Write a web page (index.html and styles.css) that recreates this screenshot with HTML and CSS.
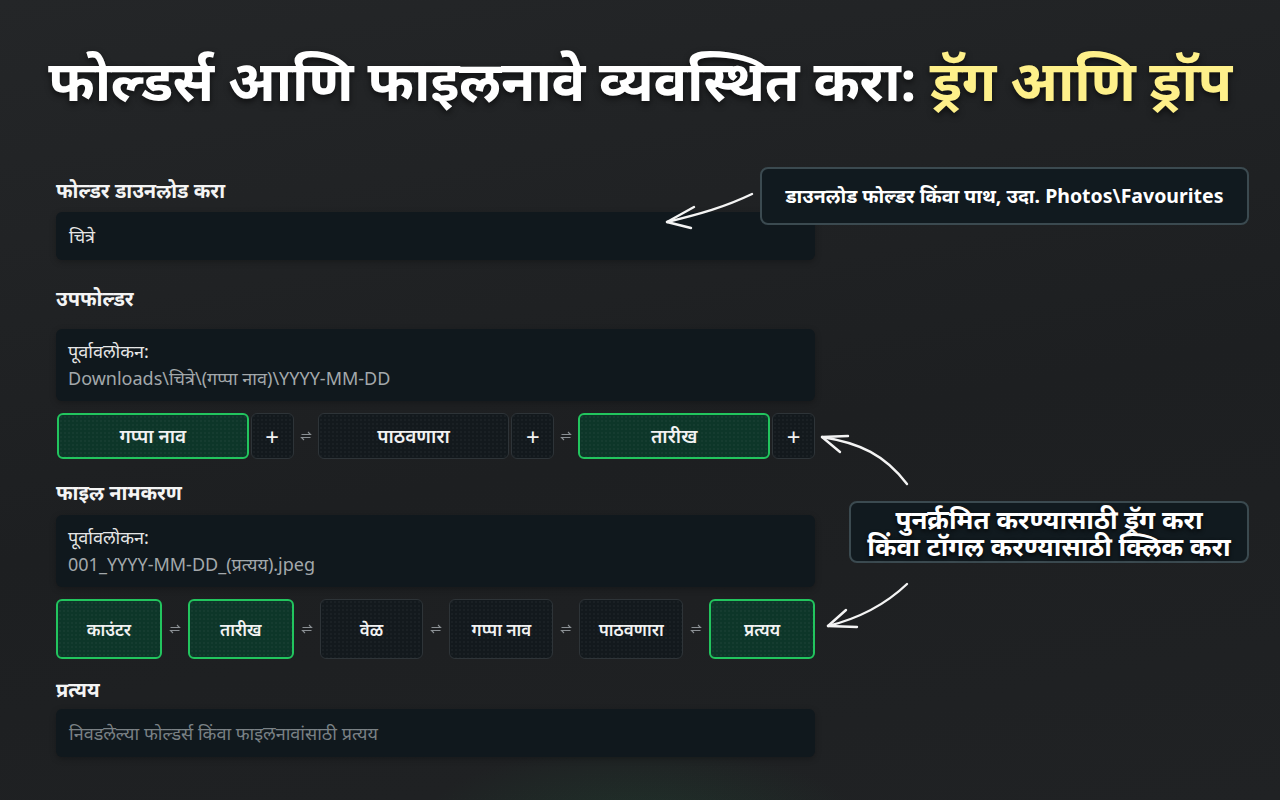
FILE: index.html
```html
<!DOCTYPE html>
<html lang="mr">
<head>
<meta charset="utf-8">
<link rel="stylesheet" href="styles.css">
</head>
<body>
<div class="page">
  <h1 class="title">फोल्डर्स आणि फाइलनावे व्यवस्थित करा: <span class="hl">ड्रॅग आणि ड्रॉप</span></h1>

  <div class="form">
    <div class="label">फोल्डर डाउनलोड करा</div>
    <div class="field">चित्रे</div>

    <div class="label sp">उपफोल्डर</div>
    <div class="preview">
      <div class="pv-title">पूर्वावलोकन:</div>
      <div class="pv-path">Downloads\चित्रे\(गप्पा नाव)\YYYY-MM-DD</div>
    </div>

    <div class="chips chips1">
      <div class="chip on">गप्पा नाव</div>
      <div class="plus">+</div>
      <span class="swap"><svg viewBox="0 0 12 12" width="12" height="12"><path d="M1.5 4.5h9l-2.5-2.5M10.5 7.5h-9l2.5 2.5" fill="none" stroke="#8a8f93" stroke-width="1.1"/></svg></span>
      <div class="chip">पाठवणारा</div>
      <div class="plus">+</div>
      <span class="swap"><svg viewBox="0 0 12 12" width="12" height="12"><path d="M1.5 4.5h9l-2.5-2.5M10.5 7.5h-9l2.5 2.5" fill="none" stroke="#8a8f93" stroke-width="1.1"/></svg></span>
      <div class="chip on">तारीख</div>
      <div class="plus">+</div>
    </div>

    <div class="label sp2">फाइल नामकरण</div>
    <div class="preview">
      <div class="pv-title">पूर्वावलोकन:</div>
      <div class="pv-path">001_YYYY-MM-DD_(प्रत्यय).jpeg</div>
    </div>

    <div class="chips chips2">
      <div class="chip on">काउंटर</div>
      <span class="swap"><svg viewBox="0 0 12 12" width="12" height="12"><path d="M1.5 4.5h9l-2.5-2.5M10.5 7.5h-9l2.5 2.5" fill="none" stroke="#8a8f93" stroke-width="1.1"/></svg></span>
      <div class="chip on">तारीख</div>
      <span class="swap"><svg viewBox="0 0 12 12" width="12" height="12"><path d="M1.5 4.5h9l-2.5-2.5M10.5 7.5h-9l2.5 2.5" fill="none" stroke="#8a8f93" stroke-width="1.1"/></svg></span>
      <div class="chip">वेळ</div>
      <span class="swap"><svg viewBox="0 0 12 12" width="12" height="12"><path d="M1.5 4.5h9l-2.5-2.5M10.5 7.5h-9l2.5 2.5" fill="none" stroke="#8a8f93" stroke-width="1.1"/></svg></span>
      <div class="chip">गप्पा नाव</div>
      <span class="swap"><svg viewBox="0 0 12 12" width="12" height="12"><path d="M1.5 4.5h9l-2.5-2.5M10.5 7.5h-9l2.5 2.5" fill="none" stroke="#8a8f93" stroke-width="1.1"/></svg></span>
      <div class="chip">पाठवणारा</div>
      <span class="swap"><svg viewBox="0 0 12 12" width="12" height="12"><path d="M1.5 4.5h9l-2.5-2.5M10.5 7.5h-9l2.5 2.5" fill="none" stroke="#8a8f93" stroke-width="1.1"/></svg></span>
      <div class="chip on">प्रत्यय</div>
    </div>

    <div class="label sp3">प्रत्यय</div>
    <div class="field ph">निवडलेल्या फोल्डर्स किंवा फाइलनावांसाठी प्रत्यय</div>
  </div>

  <div class="callout c1">डाउनलोड फोल्डर किंवा पाथ, उदा. Photos\Favourites</div>
  <div class="callout c2">पुनर्क्रमित करण्यासाठी ड्रॅग करा<br>किंवा टॉगल करण्यासाठी क्लिक करा</div>

  <svg class="arrows" width="1280" height="800" viewBox="0 0 1280 800">
    <g fill="none" stroke="#f4f4f4" stroke-width="2.4" stroke-linecap="round" stroke-linejoin="round">
      <path d="M752 194 C725 207 700 214 667 222"/>
      <path d="M694 207 L667 222 L691 228"/>
      <path d="M907 484 C885 455 860 443 822 437"/>
      <path d="M848 436 L822 437 L840 452"/>
      <path d="M907 584 C885 605 860 618 828 626"/>
      <path d="M846 610 L828 626 L857 627"/>
    </g>
  </svg>
</div>
</body>
</html>
```
FILE: styles.css
```css
* { box-sizing: border-box; }
html, body { margin: 0; padding: 0; }
body {
  width: 1280px;
  height: 800px;
  overflow: hidden;
  font-family: "Noto Sans", "Noto Sans Devanagari", "Open Sans", sans-serif;
  color: #f2f2f2;
  background:
    radial-gradient(ellipse 320px 120px at 640px 830px, rgba(34, 90, 60, 0.3), transparent 70%),
    linear-gradient(170deg, #242628 0%, #1d1f21 55%, #202224 100%);
}
.page {
  position: relative;
  width: 1280px;
  height: 800px;
}
.title {
  margin: 0;
  padding-top: 41px;
  text-align: center;
  font-size: 56px;
  font-weight: 700;
  line-height: 76px;
  color: #ffffff;
  letter-spacing: -0.3px;
  text-shadow: 0 3px 6px rgba(0,0,0,0.6);
}
.hl { color: #fef08a; }
.form {
  margin-left: 56px;
  width: 759px;
  padding-top: 62px;
  display: flex;
  flex-direction: column;
}
.label {
  font-size: 20px;
  font-weight: 700;
  line-height: 24px;
  color: #f4f4f4;
  margin-bottom: 9px;
}
.label.sp { margin-top: 27px; margin-bottom: 18px; }
.label.sp2 { margin-top: 22px; margin-bottom: 10px; }
.label.sp3 { margin-top: 19px; margin-bottom: 7px; }
.field {
  height: 48px;
  background: #10181d;
  border-radius: 6px;
  padding: 0 13px;
  display: flex;
  align-items: center;
  font-size: 18px;
  color: #e6e6e6;
  box-shadow: 0 2px 6px rgba(0,0,0,0.25);
}
.field.ph { color: #7a8185; }
.preview {
  height: 72px;
  background: #10181d;
  border-radius: 6px;
  padding: 9px 12px;
  font-size: 18px;
  line-height: 27px;
  box-shadow: 0 2px 6px rgba(0,0,0,0.25);
}
.pv-title { color: #e6e6e6; }
.pv-path { color: #a3a8ab; }
.chips {
  display: flex;
  align-items: center;
  margin-top: 12px;
}
.chip {
  height: 46px;
  border-radius: 6px;
  border: 1px solid #2e3438;
  background-color: #13191d;
  background-image: radial-gradient(rgba(255,255,255,0.035) 0.7px, transparent 0.8px);
  background-size: 4px 4px;
  display: flex;
  align-items: center;
  justify-content: center;
  font-size: 19px;
  font-weight: 600;
  color: #f2f2f2;
}
.chip.on {
  background-color: #0d3629;
  border: 2px solid #22c55e;
}
.chips1 .chip { width: 192px; }
.chips1 .chip:first-child { margin-left: 1px; }
.plus {
  width: 43px;
  height: 46px;
  margin-left: 2px;
  border-radius: 6px;
  border: 1px solid #2e3438;
  background-color: #13191d;
  background-image: radial-gradient(rgba(255,255,255,0.035) 0.7px, transparent 0.8px);
  background-size: 4px 4px;
  display: flex;
  align-items: center;
  justify-content: center;
  font-size: 24px;
  font-weight: 400;
  color: #f2f2f2;
}
.swap {
  width: 24px;
  flex: none;
  display: flex;
  justify-content: center;
  align-items: center;
}
.chips2 { margin-top: 12px; }
.chips2 .chip { flex: 1; height: 60px; font-size: 17px; }
.chips2 .swap { width: 26px; }
.callout {
  position: absolute;
  background: #111a1f;
  border: 2px solid #3b4a50;
  border-radius: 8px;
  color: #ffffff;
  font-weight: 700;
  text-align: center;
}
.c1 {
  left: 760px;
  top: 167px;
  width: 489px;
  height: 58px;
  font-size: 19.5px;
  line-height: 54px;
  white-space: nowrap;
}
.c2 {
  left: 849px;
  top: 501px;
  width: 400px;
  height: 62px;
  font-size: 26px;
  line-height: 27px;
  padding-top: 3px;
  white-space: nowrap;
  text-shadow: 0 2px 4px rgba(0,0,0,0.8);
}
.arrows {
  position: absolute;
  left: 0;
  top: 0;
  pointer-events: none;
}
```
